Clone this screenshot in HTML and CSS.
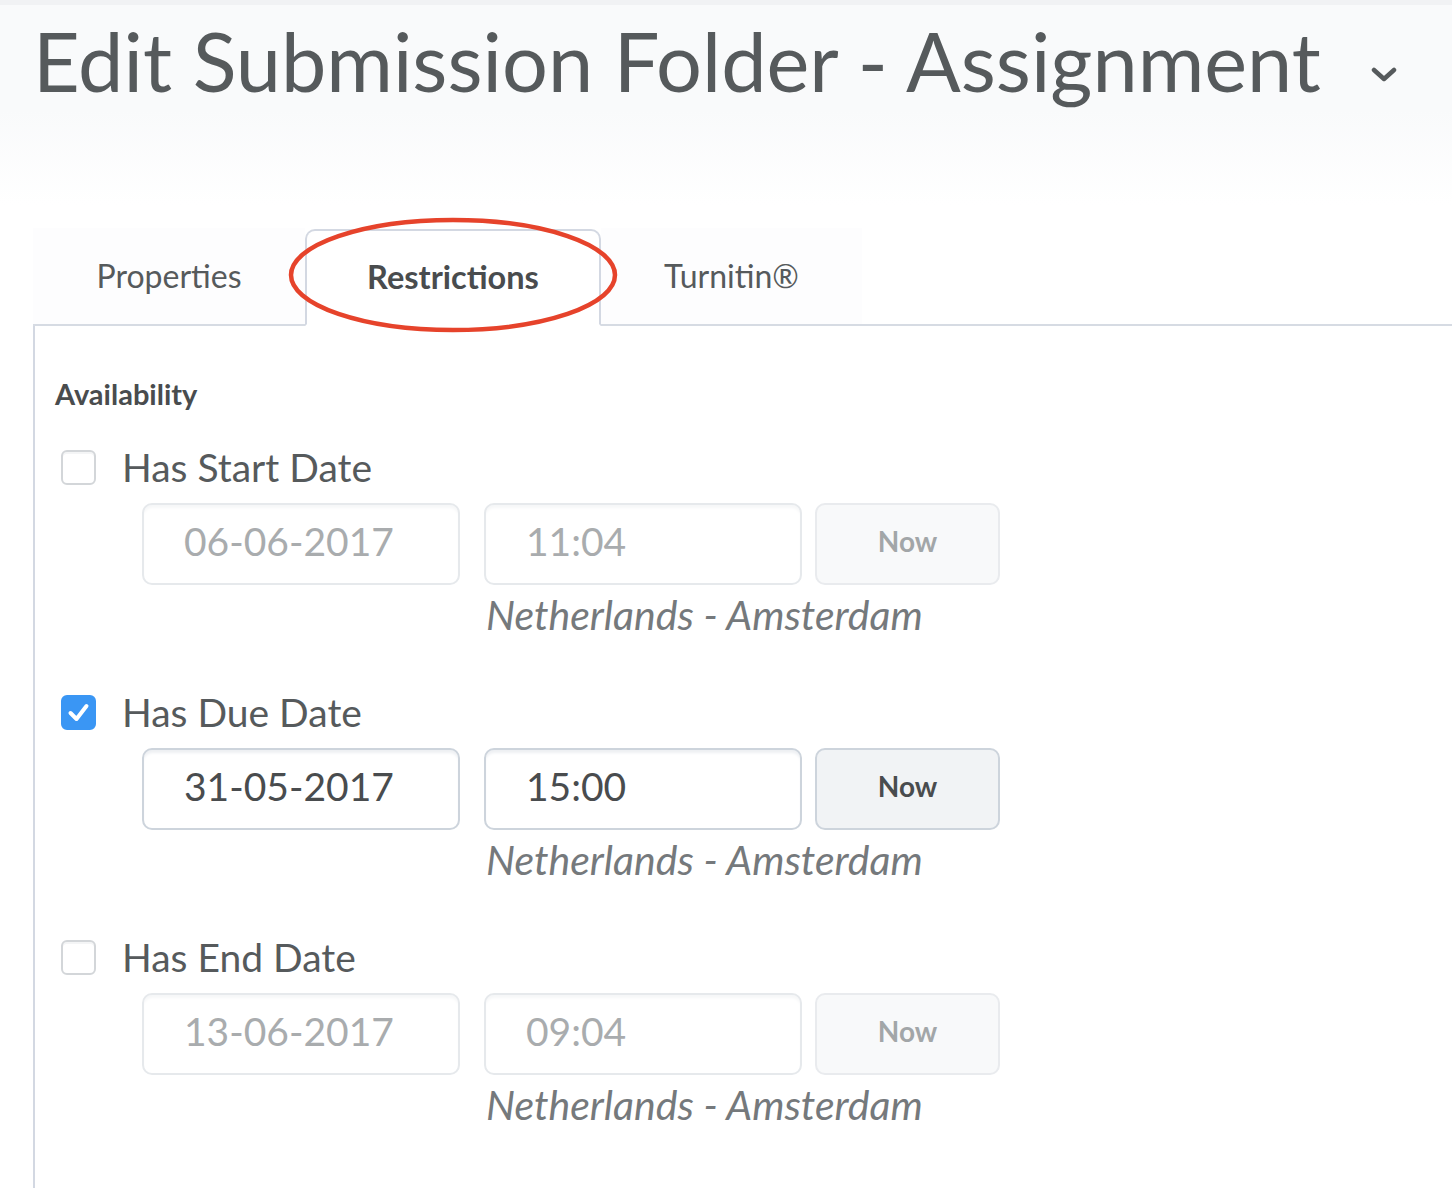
FILE: index.html
```html
<!DOCTYPE html>
<html lang="en">
<head>
<meta charset="utf-8">
<title>Edit Submission Folder - Assignment</title>
<link rel="stylesheet" href="styles.css">
</head>
<body>
<header class="page-header">
  <h1 class="title">Edit Submission Folder - Assignment<span class="chev"><svg width="26" height="18" viewBox="0 0 26 18"><polyline points="3,4 13,13 23,4" fill="none" stroke="#565a5c" stroke-width="4.5" stroke-linecap="round" stroke-linejoin="round"/></svg></span></h1>
</header>

<nav class="tabs">
  <div class="tab">Properties</div>
  <div class="tab active">Restrictions</div>
  <div class="tab tab-last">Turnitin®</div>
  <div class="tab-fill"></div>
  <svg class="annot" width="340" height="124" viewBox="0 0 340 124"><ellipse cx="170" cy="62" rx="162" ry="55" fill="none" stroke="#e6432b" stroke-width="4.5"/></svg>
</nav>

<main class="panel">
  <h2 class="section">Availability</h2>

  <section class="row">
    <label class="check-line"><span class="cb"></span><span class="cb-label">Has Start Date</span></label>
    <div class="fields">
      <div class="input disabled">06-06-2017</div>
      <div class="input disabled">11:04</div>
      <div class="btn disabled">Now</div>
    </div>
    <div class="tz">Netherlands - Amsterdam</div>
  </section>

  <section class="row">
    <label class="check-line"><span class="cb checked"><svg width="35" height="35" viewBox="0 0 35 35"><polyline points="9.5,18 15.5,24 25.5,11" fill="none" stroke="#fff" stroke-width="4" stroke-linecap="round" stroke-linejoin="round"/></svg></span><span class="cb-label">Has Due Date</span></label>
    <div class="fields">
      <div class="input">31-05-2017</div>
      <div class="input">15:00</div>
      <div class="btn">Now</div>
    </div>
    <div class="tz">Netherlands - Amsterdam</div>
  </section>

  <section class="row">
    <label class="check-line"><span class="cb"></span><span class="cb-label">Has End Date</span></label>
    <div class="fields">
      <div class="input disabled">13-06-2017</div>
      <div class="input disabled">09:04</div>
      <div class="btn disabled">Now</div>
    </div>
    <div class="tz">Netherlands - Amsterdam</div>
  </section>
</main>
</body>
</html>
```

FILE: styles.css
```css
html, body {
  margin: 0;
  padding: 0;
}
body {
  font-family: Lato, "Noto Sans", sans-serif;
  color: #565a5c;
  background: linear-gradient(#f9fafb 0px, #f9fafb 110px, #ffffff 205px);
  background-repeat: no-repeat;
  background-color: #fff;
  height: 1188px;
  overflow: hidden;
}

.page-header {
  border-top: 5px solid #f1f2f4;
  padding: 8px 0 0 33px;
  height: 210px;
  box-sizing: border-box;
}
.title {
  margin: 0;
  font-size: 81px;
  line-height: 96px;
  font-weight: 400;
  color: #565a5c;
  white-space: nowrap;
  display: flex;
  align-items: center;
}
.chev {
  display: inline-flex;
  margin-left: 50px;
  margin-top: 28px;
}

.tabs {
  position: relative;
  display: flex;
  margin: 18px 0 0 33px;
  height: 98px;
  box-sizing: border-box;
}
.tab {
  height: 98px;
  box-sizing: border-box;
  border-bottom: 2px solid #d6dbe3;
  text-align: center;
  font-size: 32px;
  line-height: 96px;
  color: #565a5c;
  background: #fdfdfe;
  width: 272px;
}
.tab.active {
  width: 296px;
  background: #fff;
  border: 2px solid #d3d8e2;
  border-bottom-color: #fff;
  border-radius: 10px 10px 0 0;
  font-weight: 700;
  font-size: 32.5px;
  color: #494c4e;
  line-height: 92px;
  margin-top: 1px;
  height: 97px;
}
.tab-last {
  width: 261px;
}
.tab-fill {
  flex: 1;
  border-bottom: 2px solid #d6dbe3;
}
.annot {
  position: absolute;
  left: 250px;
  top: -15px;
}

.panel {
  margin-left: 33px;
  border-left: 2px solid #d3d8e2;
  padding: 48px 0 0 20px;
  height: 814px;
  overflow: hidden;
}
.section {
  margin: 0;
  font-size: 29px;
  line-height: 40px;
  font-weight: 700;
  color: #494c4e;
}

.row {
  margin-top: 31px;
  margin-bottom: 51px;
}
.row + .row {
  margin-top: 0;
}
.check-line {
  display: flex;
  align-items: center;
  height: 44px;
  padding-left: 6px;
}
.cb {
  width: 35px;
  height: 35px;
  box-sizing: border-box;
  border: 2px solid #d3d6d9;
  border-radius: 6px;
  background: #fff;
  box-shadow: inset 0 2px 0 #f4f5f6;
  flex: none;
  display: inline-flex;
}
.cb.checked {
  background: #3a96f4;
  border-color: #3a96f4;
  box-shadow: none;
}
.cb.checked svg {
  margin: -2px;
}
.cb-label {
  margin-left: 26px;
  font-size: 39px;
  line-height: 44px;
  color: #565a5c;
}

.fields {
  display: flex;
  margin: 14px 0 0 87px;
}
.input {
  width: 318px;
  height: 82px;
  box-sizing: border-box;
  border: 2px solid #cdd4dc;
  border-radius: 10px;
  padding-left: 40px;
  font-size: 39px;
  line-height: 72px;
  color: #494c4e;
  background: #fff;
  box-shadow: inset 0 4px 3px -1px #eef0f3;
  margin-right: 24px;
}
.input + .input {
  margin-right: 13px;
}
.input.disabled {
  border-color: #e6e9ec;
  color: #a9acae;
  box-shadow: inset 0 4px 3px -1px #f6f7f8;
}
.btn {
  width: 185px;
  height: 82px;
  box-sizing: border-box;
  border: 2px solid #cdd4dc;
  border-radius: 10px;
  background: #f1f3f5;
  text-align: center;
  font-size: 28px;
  font-weight: 700;
  line-height: 72px;
  color: #494c4e;
}
.btn.disabled {
  background: #f8f9fa;
  border-color: #e9ebee;
  color: #a2a6a8;
}
.tz {
  margin: 6px 0 0 431px;
  font-size: 41px;
  line-height: 48px;
  font-style: italic;
  color: #75797c;
}
```
